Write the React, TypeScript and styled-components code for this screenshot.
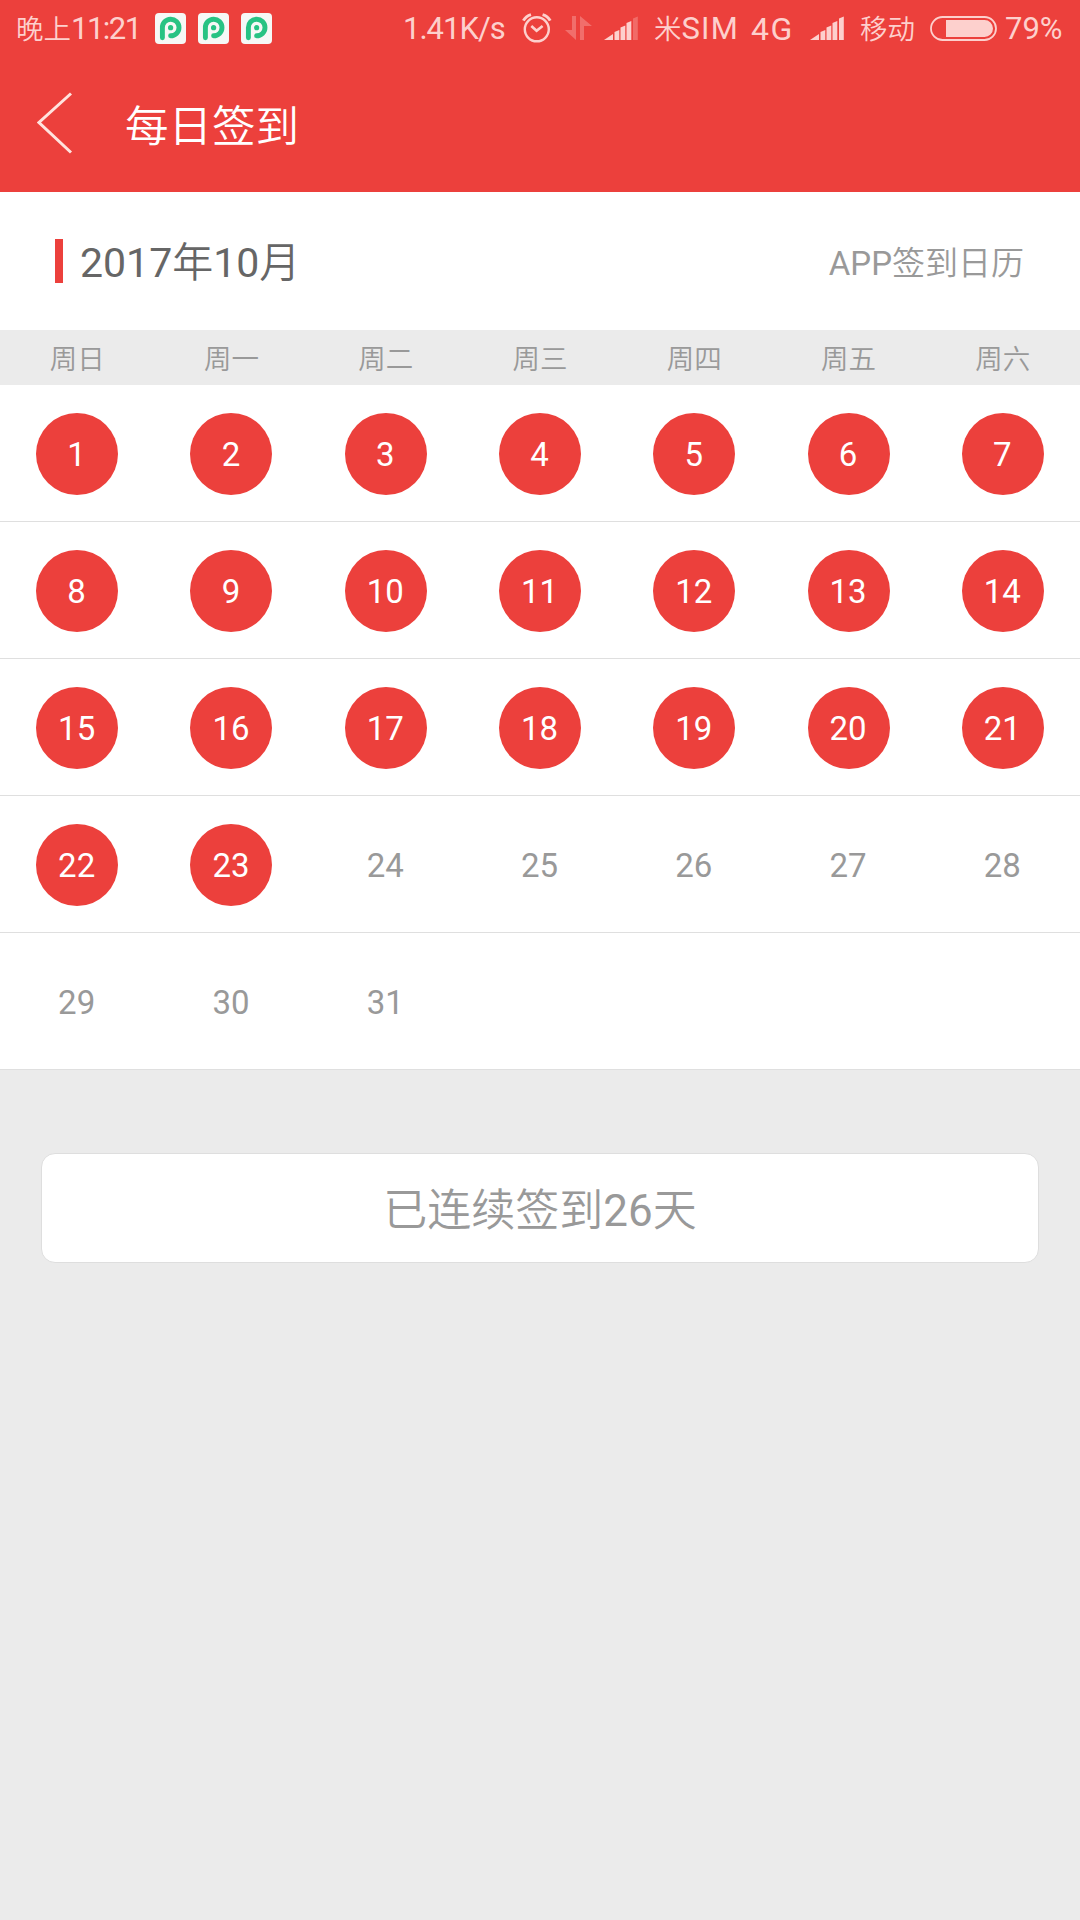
import React from "react";
import styled, { createGlobalStyle } from "styled-components";

const RED = "#ec403c";
const TINT = "#fdd0cd";

const GlobalStyle = createGlobalStyle`
  *, *::before, *::after { box-sizing: border-box; }
  body {
    margin: 0;
    background: #ebebeb;
    font-family: Roboto, "Noto Sans CJK SC DemiLight", "Noto Sans CJK SC", sans-serif;
  }
`;

const Screen = styled.div`
  display: flex;
  flex-direction: column;
  width: 1080px;
  height: 1920px;
  background: #ebebeb;
  overflow: hidden;
`;

const StatusBar = styled.div`
  display: flex;
  align-items: center;
  height: 57px;
  padding: 0 0 1px 16px;
  background: ${RED};
  color: ${TINT};
`;

const StatusText = styled.span<{ $w: number; $size?: number; $spacing?: number; $gap?: number }>`
  flex: none;
  width: ${(p) => p.$w}px;
  margin-left: ${(p) => p.$gap ?? 0}px;
  padding-top: 2px;
  font-size: ${(p) => p.$size ?? 31}px;
  line-height: 40px;
  letter-spacing: ${(p) => p.$spacing ?? 0}px;
  white-space: nowrap;
`;

const Cjk = styled.span<{ $size: number }>`
  font-size: ${(p) => p.$size}px;
  letter-spacing: 0;
`;

const StatusIcon = styled.svg<{ $gap: number }>`
  display: block;
  flex: none;
  margin-left: ${(p) => p.$gap}px;
`;

const TitleBar = styled.header`
  display: flex;
  align-items: center;
  height: 135px;
  padding: 0 0 0 37px;
  background: ${RED};
`;

const BackIcon = styled.svg`
  display: block;
  margin-bottom: 3px;
`;

const Title = styled.h1`
  margin: 0 0 0 52px;
  padding-top: 6px;
  font-size: 43.5px;
  line-height: 60px;
  font-weight: 350;
  color: #fff;
`;

const MonthBar = styled.section`
  display: flex;
  align-items: center;
  height: 138px;
  padding: 0 56px 0 55px;
  background: #fff;
`;

const Marker = styled.span`
  width: 8px;
  height: 44px;
  background: ${RED};
`;

const Month = styled.h2`
  margin: 0 0 0 17px;
  padding-top: 4px;
  font-size: 41px;
  line-height: 60px;
  font-weight: 400;
  color: #666;
`;

const Caption = styled.span`
  margin-left: auto;
  padding-top: 5px;
  font-size: 33px;
  line-height: 50px;
  color: #999;
`;

const WeekHeader = styled.div`
  display: grid;
  grid-template-columns: repeat(7, 1fr);
  align-items: center;
  height: 55px;
  padding-top: 4px;
  background: #ebebeb;
  color: #999;
  font-size: 27.5px;
  font-weight: 350;
  line-height: 40px;
  text-align: center;
`;

const Week = styled.div`
  display: grid;
  grid-template-columns: repeat(7, 1fr);
  place-items: center;
  height: 137px;
  padding-top: 1px;
  background: #fff;
  border-bottom: 1px solid #dfdfdf;
`;

const Day = styled.span<{ $signed: boolean }>`
  display: flex;
  align-items: center;
  justify-content: center;
  width: 82px;
  height: 82px;
  border-radius: 50%;
  padding: 1px 1px 0 0;
  background: ${(p) => (p.$signed ? RED : "transparent")};
  color: ${(p) => (p.$signed ? "#fff" : "#999")};
  font-size: 33px;
`;

const Streak = styled.button`
  height: 110px;
  margin: 83px 41px 0;
  padding: 6px 0 0;
  border: 1px solid #dedede;
  border-radius: 14px;
  background: #fff;
  color: #999;
  font-family: inherit;
  font-size: 44px;
  line-height: 60px;
`;

const AppLogo = ({ gap }: { gap: number }) => (
  <StatusIcon $gap={gap} width="31" height="31" viewBox="0 0 31 31">
    <rect width="31" height="31" rx="4" fill="#f6f8f6" />
    <path
      d="M7.400 24.800V14.800A8.300 8.300 0 1 1 15.600 22.800"
      fill="none"
      stroke="#27c383"
      strokeWidth="4.9"
      strokeLinecap="round"
    />
    <circle cx="15.6" cy="14.7" r="2.6" fill="#27c383" />
  </StatusIcon>
);

const AlarmIcon = () => (
  <StatusIcon $gap={0} width="30" height="30" viewBox="0 0 30 30" fill="none" stroke={TINT}>
    <circle cx="14.8" cy="16.300" r="12" strokeWidth="2.4" />
    <path d="M9.300 13l5.300 4.800 6-4.800" strokeWidth="2.6" />
    <path d="M1.400 7.600C2.800 5 5.400 2.600 9 1.600M20.600 1.600c3.600 1 6.200 3.400 7.600 6" strokeWidth="3" />
  </StatusIcon>
);

const TransferIcon = () => (
  <StatusIcon $gap={13} width="27" height="24" viewBox="0 0 27 24" fill={TINT} opacity="0.32">
    <path d="M7 0h4v24L0 14h7z" />
    <path d="M15 24h4V10h8L15 0z" />
  </StatusIcon>
);

const SignalIcon = ({ gap, level }: { gap: number; level: number }) => (
  <StatusIcon $gap={gap} width="35" height="24" viewBox="0 0 35 24" fill={TINT}>
    <path d="M0 24L9 18V24z" />
    {[
      [10.5, 14],
      [16.5, 9.5],
      [22.5, 5],
      [29, 0.5],
    ].map(([x, y], i) => (
      <path
        key={x}
        d={`M${x} ${y + 2}L${x + 4.8} ${y}V24H${x}z`}
        opacity={i + 2 > level ? 0.3 : 1}
      />
    ))}
  </StatusIcon>
);

const BatteryIcon = () => (
  <StatusIcon $gap={13} width="67" height="25" viewBox="0 0 67 25">
    <rect x="1" y="1" width="65" height="23" rx="11.5" fill="none" stroke={TINT} strokeWidth="1.8" />
    <path d="M16 4h38.500a8.500 8.500 0 0 1 0 17H16z" fill={TINT} />
  </StatusIcon>
);

const WEEKDAYS = ["周日", "周一", "周二", "周三", "周四", "周五", "周六"];
const SIGNED_UNTIL = 23;
const DAYS_IN_MONTH = 31;
const weeks = Array.from({ length: 5 }, (_, w) =>
  Array.from({ length: 7 }, (_, d) => w * 7 + d + 1).filter((n) => n <= DAYS_IN_MONTH)
);

export default function App() {
  return (
    <>
      <GlobalStyle />
      <Screen>
        <StatusBar>
          <StatusText $w={125} $spacing={-1.5}>
            <Cjk $size={27.5}>晚上</Cjk>11:21
          </StatusText>
          <AppLogo gap={14} />
          <AppLogo gap={12} />
          <AppLogo gap={12} />
          <StatusText $w={119} $gap={131} $spacing={-1}>1.41K/s</StatusText>
          <AlarmIcon />
          <TransferIcon />
          <SignalIcon gap={12} level={4} />
          <StatusText $w={97} $gap={15} $spacing={1.2}>
            <Cjk $size={27.5}>米</Cjk>SIM
          </StatusText>
          <StatusText $w={58} $size={32} $spacing={1.6}>4G</StatusText>
          <SignalIcon gap={1} level={5} />
          <StatusText $w={57} $gap={15}>
            <Cjk $size={27.5}>移动</Cjk>
          </StatusText>
          <BatteryIcon />
          <StatusText $w={64} $gap={8}>79%</StatusText>
        </StatusBar>
        <TitleBar>
          <BackIcon width="36" height="62" viewBox="0 0 36 62" fill="none" stroke="#ffe3de" strokeWidth="3">
            <path d="M34 1.500L2 30.500L34 60.500" />
          </BackIcon>
          <Title>每日签到</Title>
        </TitleBar>
        <MonthBar>
          <Marker />
          <Month>2017年10月</Month>
          <Caption>APP签到日历</Caption>
        </MonthBar>
        <WeekHeader>
          {WEEKDAYS.map((name) => (
            <span key={name}>{name}</span>
          ))}
        </WeekHeader>
        {weeks.map((days) => (
          <Week key={days[0]}>
            {days.map((n) => (
              <Day key={n} $signed={n <= SIGNED_UNTIL}>
                {n}
              </Day>
            ))}
          </Week>
        ))}
        <Streak>已连续签到26天</Streak>
      </Screen>
    </>
  );
}
